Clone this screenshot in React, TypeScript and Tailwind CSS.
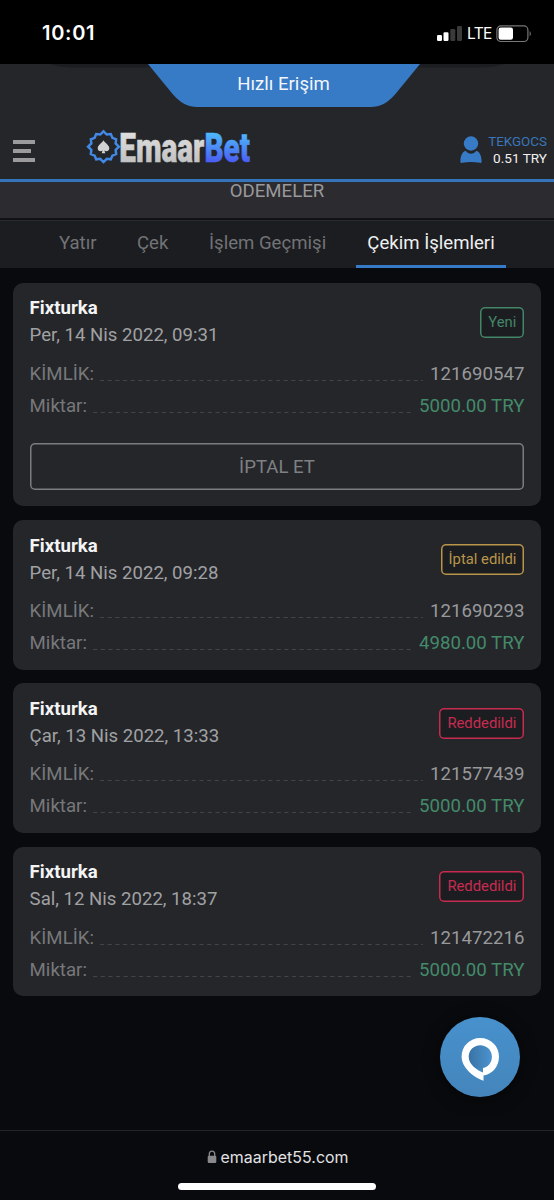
import clsx from "clsx";

type Status = "new" | "cancelled" | "rejected";

interface Withdrawal {
  id: string;
  date: string;
  amount: string;
  status: Status;
}

const WITHDRAWALS: Withdrawal[] = [
  { id: "121690547", date: "Per, 14 Nis 2022, 09:31", amount: "5000.00 TRY", status: "new" },
  { id: "121690293", date: "Per, 14 Nis 2022, 09:28", amount: "4980.00 TRY", status: "cancelled" },
  { id: "121577439", date: "Çar, 13 Nis 2022, 13:33", amount: "5000.00 TRY", status: "rejected" },
  { id: "121472216", date: "Sal, 12 Nis 2022, 18:37", amount: "5000.00 TRY", status: "rejected" },
];

const STATUS = {
  new: { label: "Yeni", className: "text-[#438668]" },
  cancelled: { label: "İptal edildi", className: "text-[#b8954b]" },
  rejected: { label: "Reddedildi", className: "text-[#c72b50]" },
};

function StatusBar() {
  return (
    <div className="flex h-16 shrink-0 justify-between bg-black pr-[21px] pl-[42px] font-['Inter',sans-serif] text-white">
      <span className="mt-[19px] text-[20px] leading-7 font-semibold tracking-[0.7px]">10:01</span>
      <div className="mt-[24px] flex h-[19px] items-center">
        <svg width="26" height="17" viewBox="0 0 26 17">
          <rect x="0" y="10" width="5" height="6" rx="1.2" fill="#fff" />
          <rect x="6.5" y="7.2" width="5" height="8.8" rx="1.2" fill="#fff" />
          <rect x="13.3" y="4" width="5" height="12" rx="1.2" fill="#3a3a3a" />
          <rect x="20" y="1" width="5" height="15" rx="1.2" fill="#3a3a3a" />
        </svg>
        <span className="ml-[4px] w-[25px] text-[15.5px] tracking-[-0.6px]">LTE</span>
        <svg className="ml-[4px]" width="37" height="18" viewBox="0 0 37 18">
          <rect x="0.9" y="0.9" width="31" height="15.6" rx="4" fill="none" stroke="#777" strokeWidth="1.2" />
          <rect x="2.6" y="2.6" width="14.4" height="12.2" rx="2.2" fill="#fff" />
          <path d="M33.6 6.3c1.6.6 1.6 4.2 0 4.8z" fill="#777" />
        </svg>
      </div>
    </div>
  );
}

// 12-pointed rosette around the spade
const ROSETTE = Array.from({ length: 24 }, (_, i) => {
  const angle = (i * Math.PI) / 12 - Math.PI / 2;
  const r = i % 2 ? 12.6 : i % 6 === 0 ? 15.4 : 14.6;
  return `${(16.5 + r * Math.cos(angle)).toFixed(2)},${(16.7 + r * Math.sin(angle)).toFixed(2)}`;
}).join(" ");

function Logo() {
  return (
    <svg width="166" height="36" viewBox="0 0 166 36" className="overflow-visible font-['Roboto',sans-serif]">
      <defs>
        <linearGradient id="bet" x1="0" y1="0" x2="0" y2="1">
          <stop offset="0.2" stopColor="#4db8fa" />
          <stop offset="0.8" stopColor="#4b5df2" />
        </linearGradient>
        <linearGradient id="emaar" x1="0" y1="0" x2="0" y2="1">
          <stop offset="0.2" stopColor="#dedede" />
          <stop offset="0.9" stopColor="#bdbdbf" />
        </linearGradient>
      </defs>
      <polygon points={ROSETTE} fill="none" stroke="#4289e6" strokeWidth="2.5" />
      <path
        d="M16.5 10.3c1.3 2.6 5.8 4.7 5.8 8 0 2.9-3.3 3.6-4.9 2.1l.9 2.800h-3.600l.9-2.800c-1.600 1.500-4.900.8-4.900-2.100 0-3.300 4.500-5.400 5.800-8z"
        fill="#d2d2d2"
      />
      <text
        x="32.3"
        y="31.8"
        fontSize="40.5"
        fontWeight="900"
        strokeWidth="0.5"
        textLength="130.7"
        lengthAdjust="spacingAndGlyphs"
      >
        <tspan fill="url(#emaar)" stroke="url(#emaar)">Emaar</tspan>
        <tspan fill="url(#bet)" stroke="url(#bet)">Bet</tspan>
      </text>
    </svg>
  );
}

function Header() {
  return (
    <header className="relative z-10 h-[118px] shrink-0 border-b-[3px] border-[#3573bb] bg-[#25262a]">
      <svg className="absolute inset-x-0 top-0" width="554" height="44" viewBox="0 0 554 44">
        <path d="M50 0H504Q496 3 484 3.5H70Q58 3 50 0Z" fill="#1c1d20" />
        <path d="M148 0H420L395 30.5C387.5 39 380 43 371 43H197C188 43 180.5 39 173 30.5Z" fill="#377ac6" />
      </svg>
      <div className="relative h-[43px] pl-[13px] text-center text-[18.6px] leading-[40px] text-[#f2f6fb]">
        Hızlı Erişim
      </div>
      <div className="flex items-start pr-[7px] pl-[13px]">
        <button className="mt-[32.5px] flex w-[22px] flex-col gap-[5px]" aria-label="Menü">
          <span className="h-1 w-[22px] bg-[#9b9b9e]" />
          <span className="h-1 w-[18px] bg-[#9b9b9e]" />
          <span className="h-1 w-[22px] bg-[#9b9b9e]" />
        </button>
        <div className="mt-[23px] ml-[52px]">
          <Logo />
        </div>
        <svg className="mt-[29px] ml-auto" width="22" height="28" viewBox="0 0 22 28">
          <circle cx="11" cy="7.5" r="7.2" fill="#377ac6" />
          <path
            d="M5.6 14.8C7 16.9 9 17.7 11 17.7s4-.8 5.4-2.9c2.6.6 5.2 4.6 5.2 10.6 0 1.2-.8 1.700-1.800 1.400-5.800-1.200-11.800-1.200-17.600 0-1 .3-1.800-.2-1.800-1.400 0-6 2.600-10 5.200-10.600z"
            fill="#377ac6"
          />
        </svg>
        <div className="mt-[25.5px] ml-[6px] w-[59px] text-right leading-[17.5px]">
          <div className="text-[13.4px] text-[#3a76b8]">TEKGOCS</div>
          <div className="text-[13.6px] text-[#f0f0f0]">0.51 TRY</div>
        </div>
      </div>
    </header>
  );
}

function Tabs() {
  return (
    <nav className="flex h-[48px] shrink-0 border-t border-[#28292d] bg-[#1c1d20] pl-[48px] text-[18.6px] leading-[45px] text-[#727376]">
      <span className="w-[78px] pl-[11px]">Yatır</span>
      <span className="w-[72px] pl-[11px]">Çek</span>
      <span className="w-[158px] pl-[11px]">İşlem Geçmişi</span>
      <span className="w-[150px] border-b-[3px] border-[#377bc8] text-center text-[#efeff0]">Çekim İşlemleri</span>
    </nav>
  );
}

function Row({ label, value, green }: { label: string; value: string; green?: boolean }) {
  return (
    <div className="flex h-[32.2px] items-center text-[18.65px] leading-[22px]">
      <span className="text-[#77787a]">{label}</span>
      <svg className="mt-[13px] mr-[7px] ml-[6px] h-px min-w-0 flex-1">
        <line x1="0" y1="0.5" x2="100%" y2="0.5" stroke="#434447" strokeDasharray="4.2 3.45" />
      </svg>
      <span className={clsx(green ? "text-[#438a6a]" : "text-[#98999b]")}>{value}</span>
    </div>
  );
}

function WithdrawalCard({ item }: { item: Withdrawal }) {
  const status = STATUS[item.status];
  return (
    <article className="rounded-[10px] bg-[#25262a] px-[16.3px] pt-[12.8px] pb-[10.5px]">
      <div className="mb-[8.2px] flex items-center justify-between text-[18.6px] leading-[27px]">
        <div>
          <h3 className="font-bold text-[#f4f4f4]">Fixturka</h3>
          <p className="text-[#a0a1a3]">{item.date}</p>
        </div>
        <span
          className={clsx(
            "h-[31px] rounded-[5px] bg-[#1c1d20] px-[8px] text-[14.8px] leading-[31px] shadow-[inset_0_0_0_1.5px_currentColor]",
            status.className,
          )}
        >
          {status.label}
        </span>
      </div>
      <Row label="KİMLİK:" value={item.id} />
      <Row label="Miktar:" value={item.amount} green />
      {item.status === "new" && (
        <button className="mt-[21.5px] mb-[5.5px] block h-[47px] w-full rounded-[5px] pt-[2px] text-[18.6px] text-[#7f8083] shadow-[inset_0_0_0_1.5px_#7b7c7f]">
          İPTAL ET
        </button>
      )}
    </article>
  );
}

function ChatButton() {
  return (
    <button
      className="absolute top-[1017px] left-[440px] h-20 w-20 rounded-full bg-linear-to-b from-[#4791cd] to-[#4485bb] shadow-[0_2px_16px_rgba(0,0,0,0.5)]"
      aria-label="Canlı destek"
    >
      <svg width="80" height="80" viewBox="0 0 80 80">
        <defs>
          <linearGradient id="bubble" x1="0" y1="0" x2="1" y2="0">
            <stop offset="0" stopColor="#3972a5" />
            <stop offset="1" stopColor="#4c94cf" />
          </linearGradient>
        </defs>
        <circle cx="40.3" cy="40" r="12" fill="url(#bubble)" />
        <path
          fillRule="evenodd"
          fill="#fff"
          d="M40.3 21C50.8 21 59 29.2 59 39.5C59 49.5 52.5 57 43.5 58.5V63.8C34 60.5 21.6 51 21.6 39.5C21.6 29.2 29.8 21 40.3 21ZM40.3 28.2C33.8 28.2 28.7 33.3 28.7 39.7C28.7 47.5 37 53.2 43 55.5V50.9C48.3 50 51.9 45.5 51.9 39.7C51.9 33.3 46.8 28.2 40.3 28.2Z"
        />
      </svg>
    </button>
  );
}

export default function App() {
  return (
    <div className="relative flex h-[1200px] w-[554px] flex-col overflow-hidden bg-[#090a0d] font-['Roboto',sans-serif]">
      <StatusBar />
      <Header />
      <div className="flex h-[36px] shrink-0 justify-center bg-[#2c2b2f] text-[18.6px] leading-[19px] text-[#98999b]">
        ODEMELER
      </div>
      <div className="h-[2px] shrink-0 bg-[#111215]" />
      <Tabs />
      <main className="flex flex-col gap-[13.5px] px-[13.3px] pt-[14.5px]">
        {WITHDRAWALS.map((item) => (
          <WithdrawalCard key={item.id} item={item} />
        ))}
      </main>
      <ChatButton />
      <footer className="mt-auto flex h-[70px] shrink-0 flex-col items-center border-t border-[#242528] font-['Inter',sans-serif]">
        <div className="mt-[15px] flex h-6 items-center gap-[3px] pl-[2px] text-[15.9px] tracking-[0.05px] text-[#e2e2e4]">
          <svg className="-mt-[2px]" width="10" height="14" viewBox="0 0 10 14">
            <path d="M2.3 6V4a2.7 2.9 0 0 1 5.4 0v2" fill="none" stroke="#89898c" strokeWidth="1.3" />
            <rect x="0.7" y="5.7" width="8.6" height="7.3" rx="1.2" fill="#89898c" />
          </svg>
          emaarbet55.com
        </div>
        <div className="mt-[13px] h-[7px] w-[198px] rounded-full bg-white" />
      </footer>
    </div>
  );
}
